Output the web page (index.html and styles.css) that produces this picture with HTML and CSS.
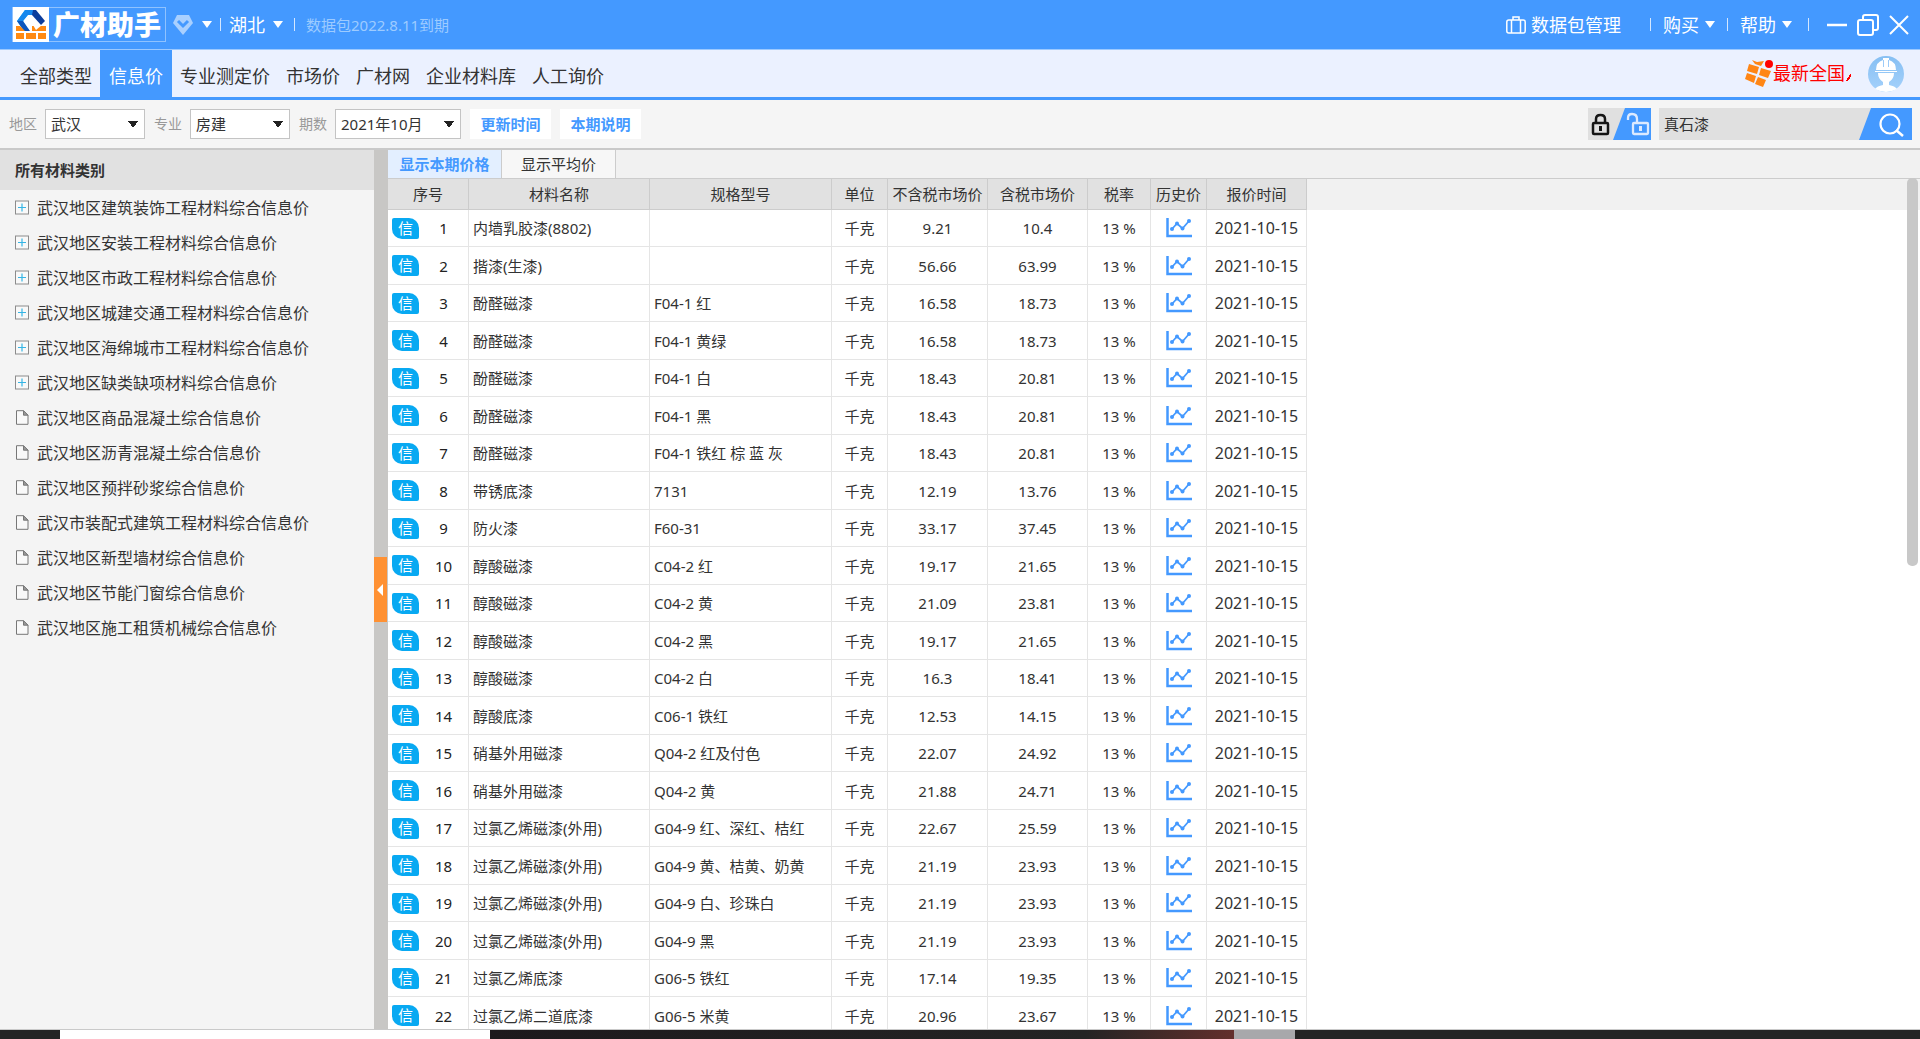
FILE: index.html
```html
<!DOCTYPE html>
<html lang="zh-CN">
<head>
<meta charset="utf-8">
<title>广材助手</title>
<link rel="stylesheet" href="styles.css">
</head>
<body>
<svg class="defs" aria-hidden="true">
  <symbol id="chart" viewBox="0 0 26 20"><path d="M1.500 0v18H26" fill="none" stroke="#4499ff" stroke-width="2.500"/><path d="M6 11l5-5.500 5.500 5 6.500-7.500" fill="none" stroke="#4499ff" stroke-width="1.800"/><g fill="#4499ff"><circle cx="6" cy="11" r="2"/><circle cx="11" cy="5.500" r="2"/><circle cx="16.500" cy="10.500" r="2"/><circle cx="23" cy="3" r="2"/></g></symbol>
  <symbol id="plus" viewBox="0 0 14 14"><rect x=".5" y=".5" width="13" height="13" fill="#f9f9f9" stroke="#8c8c8c"/><path d="M3 7h8M7 3v8" stroke="#35b5e5" stroke-width="1.200"/></symbol>
  <symbol id="doc" viewBox="0 0 14 15"><path d="M1.500.7h7l4.500 4.500v9.100H1.500z" fill="#f9f9f9" stroke="#777"/><path d="M8.500.7v4.500H13z" fill="#999" stroke="#777"/></symbol>
</svg>
<div class="app">
  <header class="titlebar">
    <div class="brand">
      <svg class="brand-mark" viewBox="0 0 36 35"><path fill="#fff" d="M0 0h36v35H0z"/><path d="M12 3L4 14l7 10h5l-6-10 6-8z" fill="#27b8f5"/><path d="M12 3h11l-3 5h-5l-5 6-6 0z" fill="#1688ee"/><path d="M20 3h3l9 11-4 4-9-10z" fill="#0c3d9c"/><path d="M4 14h6l7 10h-6z" fill="#0d56bd"/><path d="M3 19h4l5 5H3zM19 19h14v5H19zM3 26h8v6H3zM13 26h10v6H13zM25 26h8v6h-8z" fill="#ff8a12"/><path d="M20 18l3 5 6-5z" fill="#fff"/></svg>
      <span class="brand-name">广材助手</span>
    </div>
    <svg class="gem" viewBox="0 0 20 20"><path d="M4 0h12l4 8-10 12L0 8z" fill="#a9d0ff"/><path d="M5 6l5 5 5-5" fill="none" stroke="#4499ff" stroke-width="3"/></svg>
    <span class="caret gap-wide"></span><span class="bar"></span>
    <button class="menu">湖北<span class="caret"></span></button><span class="bar bar-wide"></span>
    <span class="expiry">数据包2022.8.11到期</span>
    <span class="spacer"></span>
    <button class="menu packs"><svg width="20" height="18" viewBox="0 0 20 18" fill="none" stroke="#fff" stroke-width="1.500"><rect x=".8" y="4" width="18.400" height="13" rx="2"/><path d="M5.500 17V4M14.500 17V4M7 4V1h6v3"/></svg>数据包管理</button>
    <span class="bar"></span><button class="menu">购买<span class="caret"></span></button>
    <span class="bar"></span><button class="menu">帮助<span class="caret"></span></button>
    <span class="bar bar-last"></span>
    <div class="window-controls">
      <button aria-label="最小化"><svg width="20" height="22" viewBox="0 0 20 22"><path d="M0 11h20" stroke="#fff" stroke-width="2.500"/></svg></button>
      <button aria-label="还原"><svg width="22" height="22" viewBox="0 0 22 22" fill="none" stroke="#fff" stroke-width="2"><rect x="1" y="6" width="15" height="15" rx="2"/><path d="M6 6V3q0-2 2-2h11q2 0 2 2v11q0 2-2 2h-3"/></svg></button>
      <button aria-label="关闭"><svg width="20" height="22" viewBox="0 0 20 22"><path d="M1 2l18 18M19 2L1 20" stroke="#fff" stroke-width="2"/></svg></button>
    </div>
  </header>
  <nav class="tabs">
    <a href="#">全部类型</a><a href="#" class="active">信息价</a><a href="#">专业测定价</a><a href="#">市场价</a><a href="#">广材网</a><a href="#">企业材料库</a><a href="#">人工询价</a>
    <span class="spacer"></span>
    <a href="#" class="promo"><svg width="28" height="27" viewBox="0 0 28 27"><g fill="#ff8615"><path d="M4 4l10 3-2 7-10-3zM16 8l10 3-3 7-9-3zM2 13l9 3-2 7-9-4zM13 17l8 3-3 7-8-3zM7 0l5 2 7-1-3 5-6-2z"/></g><circle cx="24" cy="4" r="4" fill="red"/></svg><span>最新全国</span><i class="cut"></i></a>
    <svg class="avatar" viewBox="0 0 36 36"><defs><linearGradient id="sky" x2="0" y2="1"><stop stop-color="#86bff3"/><stop offset="1" stop-color="#a5d1fb"/></linearGradient></defs><circle cx="18" cy="18" r="18" fill="url(#sky)"/><path d="M8 14q0-8 7-10V2h6v2q7 2 7 10zM7 15h22v1H7zM10 17h16q0 6-5 9v3q6 1 8 4-11 6-22 0 2-3 8-4v-3q-5-3-5-9z" fill="#fff"/><path d="M15.500 4v7M20.500 4v7" stroke="#9ccbf8"/></svg>
  </nav>
  <form class="filters">
    <label for="area">地区</label><select id="area"><option>武汉</option></select>
    <label for="major">专业</label><select id="major"><option>房建</option></select>
    <label for="period">期数</label><select id="period" class="period"><option>2021年10月</option></select>
    <button type="button" class="action">更新时间</button><button type="button" class="action">本期说明</button>
    <span class="spacer"></span>
    <button type="button" class="lock" aria-label="锁定"><svg width="63" height="32" viewBox="0 0 63 32" fill="none"><path d="M37 0h26v32H25z" fill="#4499ff"/><g stroke="#151515" stroke-width="2.500"><rect x="5" y="15" width="15" height="11" rx="1"/><path d="M8 15v-4q0-4 4.500-4t4.500 4v4"/></g><path d="M12.500 18v5" stroke="#151515" stroke-width="3"/><g stroke="#dceaff" stroke-width="2.300"><rect x="45" y="15" width="15" height="11" rx="1"/><path d="M40 12v-2q0-4 4-4 5 0 5 5v4"/></g><path d="M52.500 18v5" stroke="#dceaff" stroke-width="3"/></svg></button>
    <div class="search"><input type="text" aria-label="搜索" value="真石漆"><button type="button" aria-label="搜索"><svg width="53" height="32" viewBox="0 0 53 32"><path d="M12 0h41v32H0z" fill="#4499ff"/><circle cx="31" cy="16" r="9.500" fill="none" stroke="#fff" stroke-width="2.200"/><path d="M37 22l7 6" stroke="#fff" stroke-width="2.500"/></svg></button></div>
  </form>
  <main class="work">
    <aside class="side">
      <h2>所有材料类别</h2>
      <ul id="tree"></ul>
    </aside>
    <div class="splitter"><button aria-label="收起"></button></div>
    <section class="content">
      <div class="views"><button class="active">显示本期价格</button><button>显示平均价</button></div>
      <div class="grid">
        <table>
          <colgroup><col class="c-no"><col class="c-name"><col class="c-spec"><col class="c-unit"><col class="c-price"><col class="c-price"><col class="c-rate"><col class="c-hist"><col class="c-date"></colgroup>
          <thead><tr><th>序号</th><th>材料名称</th><th>规格型号</th><th>单位</th><th>不含税市场价</th><th>含税市场价</th><th>税率</th><th>历史价</th><th>报价时间</th></tr></thead>
          <tbody id="rows"></tbody>
        </table>
        <div class="scrollbar"></div>
      </div>
    </section>
  </main>
  <footer class="taskbar"><span class="dark"></span><span class="field"></span><span class="long"></span><span class="pale"></span><span class="rest"></span></footer>
</div>
<script src="app.js"></script>
</body>
</html>
```
FILE: styles.css
```css
* { box-sizing: border-box; }
body { margin: 0; font: 15px/20px "Noto Sans", "Noto Sans CJK SC", sans-serif; color: #333; background: #f4f4f4; }
button, input, select { font: inherit; color: inherit; border: 0; border-radius: 0; margin: 0; padding: 0; background: none; }
.defs { display: none; }
.app { display: flex; flex-direction: column; height: 100vh; overflow: hidden; }
.spacer { flex: 1; }
svg { display: block; flex: none; }

.titlebar { display: flex; align-items: center; flex: none; height: 49px; padding: 0 11px 0 12px; background: #4499ff; color: #fff; font-size: 18px; }
.brand { display: flex; align-items: center; height: 35px; border: 1px solid #8fc2ff; }
.brand-mark { width: 36px; height: 35px; }
.brand-name { width: 116px; text-align: center; font-size: 27px; line-height: 32px; font-weight: 900; }
.gem { width: 20px; height: 20px; margin-left: 7px; }
.caret { width: 0; height: 0; border: 5px solid transparent; border-top: 7px solid currentColor; border-bottom: 0; }
.gap-wide { margin-left: 9px; }
.bar { width: 1px; height: 13px; margin: 0 8px; background: #d4e7ff; }
.menu { display: flex; align-items: center; gap: 8px; }
.bar-wide { margin: 0 11px; }
.expiry { font-size: 15px; color: #9dcbff; }
.packs { gap: 5px; margin-right: 17px; }
.titlebar > .spacer ~ .bar { margin: 0 12px; }
.titlebar > .spacer ~ .bar-last { margin-left: 16px; }
.titlebar > .spacer ~ .menu:not(.packs) { gap: 6px; }
.window-controls { display: flex; gap: 10px; margin-left: 6px; }

.tabs { display: flex; align-items: center; flex: none; height: 51px; border-top: 1px solid #9cc9ff; border-bottom: 3px solid #4499ff; background: #ebf1ff; font-size: 18px; }
.tabs a { height: 47px; padding: 0 8px; line-height: 53px; color: #333; text-decoration: none; white-space: nowrap; }
.tabs a:first-child { padding: 0 8px 0 20px; }
.tabs a.active { padding: 0 9px; background: #4499ff; color: #fff; }
.tabs a.promo { display: flex; align-items: center; padding: 0; color: red; }
.cut { width: 5px; height: 7px; margin: 8px 0 0 1px; background: linear-gradient(125deg, transparent 45%, red 45% 70%, transparent 70%); }
.avatar { width: 36px; height: 36px; margin: 0 16px 0 17px; }

.filters { display: flex; align-items: center; flex: none; height: 50px; padding: 0 8px 0 9px; border-bottom: 2px solid #c9c9c9; background: #f5f5f5; }
.filters label { font-size: 14px; color: #999; }
.filters select { appearance: none; width: 100px; height: 30px; margin: 0 9px 0 8px; padding: 0 5px; border: 1px solid #c4c4c4; background-color: #fff; background-image: linear-gradient(to bottom right, transparent 50%, transparent 0), linear-gradient(to bottom left, #222 50%, transparent 0), linear-gradient(to bottom right, #222 50%, transparent 0); background-repeat: no-repeat; background-position: right 6px center, right 11px center, right 6px center; background-size: 5px 7px; }
.filters select.period { width: 126px; }
.action { width: 81px; height: 30px; margin-right: 9px; background: #fff; color: #4499ff; font-weight: 700; }
.lock { height: 32px; background: #e0e0e0; }
.search { display: flex; width: 253px; height: 32px; margin-left: 8px; background: #e0e0e0; }
.search input { flex: 1; min-width: 0; padding: 0 5px; }

.work { display: flex; flex: 1; min-height: 0; }
.side { flex: none; width: 374px; background: #f4f4f4; }
.side h2 { margin: 0; padding: 0 15px; height: 40px; background: #e1e1e1; font-size: 15px; line-height: 41px; font-weight: 700; }
.side ul { margin: 0; padding: 0; list-style: none; }
.side li { display: flex; align-items: center; gap: 8px; height: 35px; padding-left: 15px; font-size: 16px; }
.side li svg { width: 14px; height: 15px; }
.splitter { display: flex; align-items: center; flex: none; width: 14px; background: #c8c7c5; }
.splitter button { width: 13px; height: 65px; background: #ff9133; }
.splitter button::before { content: ""; display: block; width: 0; margin-left: 3px; border: 6px solid transparent; border-left: 0; border-right-color: #fff; }
.content { display: flex; flex-direction: column; flex: 1; min-width: 0; background: #fff; }
.views { display: flex; flex: none; height: 28px; background: #f1f1f1; }
.views button { width: 114px; border-right: 1px solid #ccc; background: #f7f7f7; }
.views button.active { background: #e3efff; color: #4499ff; font-weight: 700; }
.grid { display: flex; justify-content: space-between; flex: 1; min-height: 0; overflow: hidden; background: linear-gradient(#ccc 1px, #f1f1f1 1px 32px, #fff 32px); }
table { table-layout: fixed; width: 919px; border-collapse: separate; border-spacing: 0; align-self: flex-start; }
.c-no { width: 81px; } .c-name { width: 181px; } .c-spec { width: 182px; } .c-unit { width: 56px; } .c-price { width: 100px; } .c-rate { width: 63px; } .c-hist { width: 56px; } .c-date { width: 100px; }
th { height: 32px; padding: 0; border: 1px solid #ccc; border-left: 0; background: #e1e1e1; font-weight: 400; white-space: nowrap; }
td { height: 37px; padding: 0 4px; border: 1px solid #e5e5e5; border-width: 0 1px 1px 0; text-align: center; white-space: nowrap; }
tbody tr:nth-child(even) td { height: 38px; }
td:nth-child(2), td:nth-child(3) { text-align: left; }
td.date { font-size: 16px; padding: 0; }
td svg { width: 26px; height: 20px; margin: 0 auto; }
.no { display: flex; align-items: center; color: #222; }
.no b { width: 27px; height: 21px; border-radius: 2px 10px 2px 10px; background: #08a9f2; color: #fff; font-weight: 400; line-height: 21px; }
.no span { flex: 1; padding-left: 4px; }
.scrollbar { width: 11px; height: 388px; margin-right: 2px; border-radius: 5px; background: #c8c8c8; }

.taskbar { display: flex; flex: none; height: 10px; border-top: 1px solid #c9c9c9; background: #242424; }
.dark { width: 60px; }
.field { width: 430px; background: #fff; }
.long { flex: 744; background: linear-gradient(90deg, #1d191c, #242424 80%, #632f2c); }
.pale { width: 61px; background: #a8a8ab; }
.rest { flex: 625; background: #242424; }
```
FILE: app.js
```js
const branches = ["武汉地区建筑装饰工程材料综合信息价", "武汉地区安装工程材料综合信息价", "武汉地区市政工程材料综合信息价", "武汉地区城建交通工程材料综合信息价", "武汉地区海绵城市工程材料综合信息价", "武汉地区缺类缺项材料综合信息价"];
const leaves = ["武汉地区商品混凝土综合信息价", "武汉地区沥青混凝土综合信息价", "武汉地区预拌砂浆综合信息价", "武汉市装配式建筑工程材料综合信息价", "武汉地区新型墙材综合信息价", "武汉地区节能门窗综合信息价", "武汉地区施工租赁机械综合信息价"];
const item = icon => name => `<li><svg><use href="#${icon}"/></svg>${name}</li>`;
document.getElementById("tree").innerHTML = branches.map(item("plus")).join("") + leaves.map(item("doc")).join("");

const materials = [
  ["内墙乳胶漆(8802)", "", "9.21", "10.4"],
  ["揩漆(生漆)", "", "56.66", "63.99"],
  ["酚醛磁漆", "F04-1 红", "16.58", "18.73"],
  ["酚醛磁漆", "F04-1 黄绿", "16.58", "18.73"],
  ["酚醛磁漆", "F04-1 白", "18.43", "20.81"],
  ["酚醛磁漆", "F04-1 黑", "18.43", "20.81"],
  ["酚醛磁漆", "F04-1 铁红 棕 蓝 灰", "18.43", "20.81"],
  ["带锈底漆", "7131", "12.19", "13.76"],
  ["防火漆", "F60-31", "33.17", "37.45"],
  ["醇酸磁漆", "C04-2 红", "19.17", "21.65"],
  ["醇酸磁漆", "C04-2 黄", "21.09", "23.81"],
  ["醇酸磁漆", "C04-2 黑", "19.17", "21.65"],
  ["醇酸磁漆", "C04-2 白", "16.3", "18.41"],
  ["醇酸底漆", "C06-1 铁红", "12.53", "14.15"],
  ["硝基外用磁漆", "Q04-2 红及付色", "22.07", "24.92"],
  ["硝基外用磁漆", "Q04-2 黄", "21.88", "24.71"],
  ["过氯乙烯磁漆(外用)", "G04-9 红、深红、桔红", "22.67", "25.59"],
  ["过氯乙烯磁漆(外用)", "G04-9 黄、桔黄、奶黄", "21.19", "23.93"],
  ["过氯乙烯磁漆(外用)", "G04-9 白、珍珠白", "21.19", "23.93"],
  ["过氯乙烯磁漆(外用)", "G04-9 黑", "21.19", "23.93"],
  ["过氯乙烯底漆", "G06-5 铁红", "17.14", "19.35"],
  ["过氯乙烯二道底漆", "G06-5 米黄", "20.96", "23.67"]
];
document.getElementById("rows").innerHTML = materials.map(([name, spec, net, gross], i) =>
  `<tr><td><div class="no"><b>信</b><span>${i + 1}</span></div></td><td>${name}</td><td>${spec}</td><td>千克</td><td>${net}</td><td>${gross}</td><td>13 %</td><td><svg><use href="#chart"/></svg></td><td class="date">2021-10-15</td></tr>`).join("");
```
